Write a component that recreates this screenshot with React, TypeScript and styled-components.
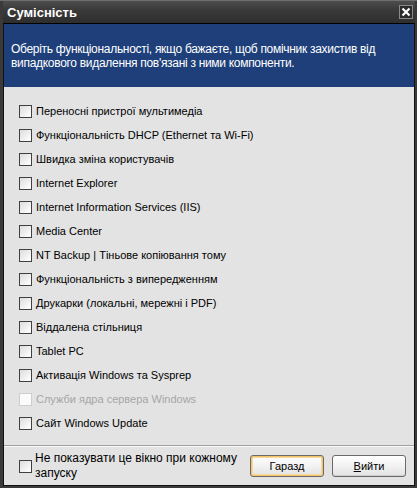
import styled, { createGlobalStyle } from "styled-components";

const GlobalStyle = createGlobalStyle`
  html, body { margin: 0; padding: 0; background: #3a3a3a; }
  body { font-family: "Liberation Sans", Arial, sans-serif; }
`;

type Item = { label: string; disabled?: boolean };

const items: Array<Item> = [
    { label: "Переносні пристрої мультимедіа" },
    { label: "Функціональність DHCP (Ethernet та Wi-Fi)" },
    { label: "Швидка зміна користувачів" },
    { label: "Internet Explorer" },
    { label: "Internet Information Services (IIS)" },
    { label: "Media Center" },
    { label: "NT Backup | Тіньове копіювання тому" },
    { label: "Функціональність з випередженням" },
    { label: "Друкарки (локальні, мережні і PDF)" },
    { label: "Віддалена стільниця" },
    { label: "Tablet PC" },
    { label: "Активація Windows та Sysprep" },
    { label: "Служби ядра сервера Windows", disabled: true },
    { label: "Сайт Windows Update" },
];

export default function App() {
    return <Window>
        <GlobalStyle />
        <TitleBar>
            <Title>Сумісність</Title>
            <CloseButton aria-label="close">
                <svg width="10" height="10" viewBox="0 0 10 10">
                    <path d="M1.5 1.5 L8.5 8.5 M8.5 1.5 L1.5 8.5" stroke="#fff" strokeWidth="2.2" />
                </svg>
            </CloseButton>
        </TitleBar>
        <Frame>
            <Banner>
                <BannerLine>Оберіть функціональності, якщо бажаєте, щоб помічник захистив від</BannerLine>
                <BannerLine>випадкового видалення пов'язані з ними компоненти.</BannerLine>
            </Banner>
            <List>
                {items.map(item => (
                    <Row key={item.label} $disabled={item.disabled}>
                        <Box $disabled={item.disabled} />
                        <span>{item.label}</span>
                    </Row>
                ))}
            </List>
            <Footer>
                <FooterCheck>
                    <Box />
                    <FooterText>Не показувати це вікно при кожному запуску</FooterText>
                </FooterCheck>
                <Buttons>
                    <Button $default>Гаразд</Button>
                    <Button><u>В</u>ийти</Button>
                </Buttons>
            </Footer>
        </Frame>
    </Window>
}

const Window = styled.div`
  width: 417px;
  height: 488px;
  box-sizing: border-box;
  display: flex;
  flex-direction: column;
  background: #3a3a3a;
  padding: 0 2px 2px 3px;
  border-top: 1px solid #6e6e6e;
`;

const TitleBar = styled.div`
  height: 22px;
  display: flex;
  align-items: center;
  justify-content: space-between;
  padding: 0 2px 0 4px;
  background: linear-gradient(#4e4e4e, #3a3a3a 40%, #2e2e2e);
`;

const Title = styled.div`
  color: #fff;
  font-family: "Liberation Sans", Arial, sans-serif;
  font-weight: bold;
  font-size: 13px;
`;

const CloseButton = styled.div`
  width: 14px;
  height: 14px;
  box-sizing: border-box;
  border: 1px solid #8a8a8a;
  background: #2a2a2a;
  display: flex;
  align-items: center;
  justify-content: center;
`;

const Frame = styled.div`
  flex: 1;
  display: flex;
  flex-direction: column;
  border: 1px solid #111;
  border-top-color: #000;
  background: #e3e3e3;
`;

const Banner = styled.div`
  height: 63px;
  box-sizing: border-box;
  background: #1e3f79;
  color: #fff;
  font-size: 12px;
  letter-spacing: -0.3px;
  line-height: 14px;
  padding: 18px 8px 0 7px;
`;

const BannerLine = styled.div`
  white-space: nowrap;
`;

const List = styled.div`
  flex: 1;
  display: flex;
  flex-direction: column;
  padding: 12px 0 0 15px;
  border-bottom: 1px solid #a0a0a0;
`;

const Row = styled.label<{ $disabled?: boolean }>`
  height: 24px;
  display: flex;
  align-items: center;
  gap: 4px;
  font-size: 11px;
  color: ${p => p.$disabled ? "#a6a6a6" : "#000"};
`;

const Box = styled.span<{ $disabled?: boolean }>`
  width: 13px;
  height: 13px;
  box-sizing: border-box;
  flex: none;
  border: 1px solid ${p => p.$disabled ? "#cfcfcf" : "#404040"};
  background: ${p => p.$disabled ? "#fbfbfb" : "linear-gradient(135deg, #dcdcdc, #f6f6f6 70%, #ffffff)"};
`;

const Footer = styled.div`
  height: 38px;
  display: flex;
  align-items: center;
  justify-content: space-between;
  padding: 0 10px 0 15px;
  border-top: 1px solid #fafafa;
`;

const FooterCheck = styled.div`
  display: flex;
  align-items: center;
  gap: 3px;
`;

const FooterText = styled.div`
  width: 215px;
  font-size: 12px;
  line-height: 15px;
  color: #000;
`;

const Buttons = styled.div`
  display: flex;
  gap: 8px;
`;

const Button = styled.button<{ $default?: boolean }>`
  width: 74px;
  height: 22px;
  padding: 0;
  font-family: "Liberation Sans", Arial, sans-serif;
  font-size: 11px;
  color: #000;
  border: 1px solid #6a6a6a;
  border-radius: 3px;
  background: linear-gradient(#ffffff, #f2f2f2 50%, #e2e2e2);
  box-shadow: ${p => p.$default ? "inset 0 0 0 1px #f3c36a, inset 0 0 0 2px #f7d9a0" : "inset 0 -1px 0 #d0d0d0"};
`;
